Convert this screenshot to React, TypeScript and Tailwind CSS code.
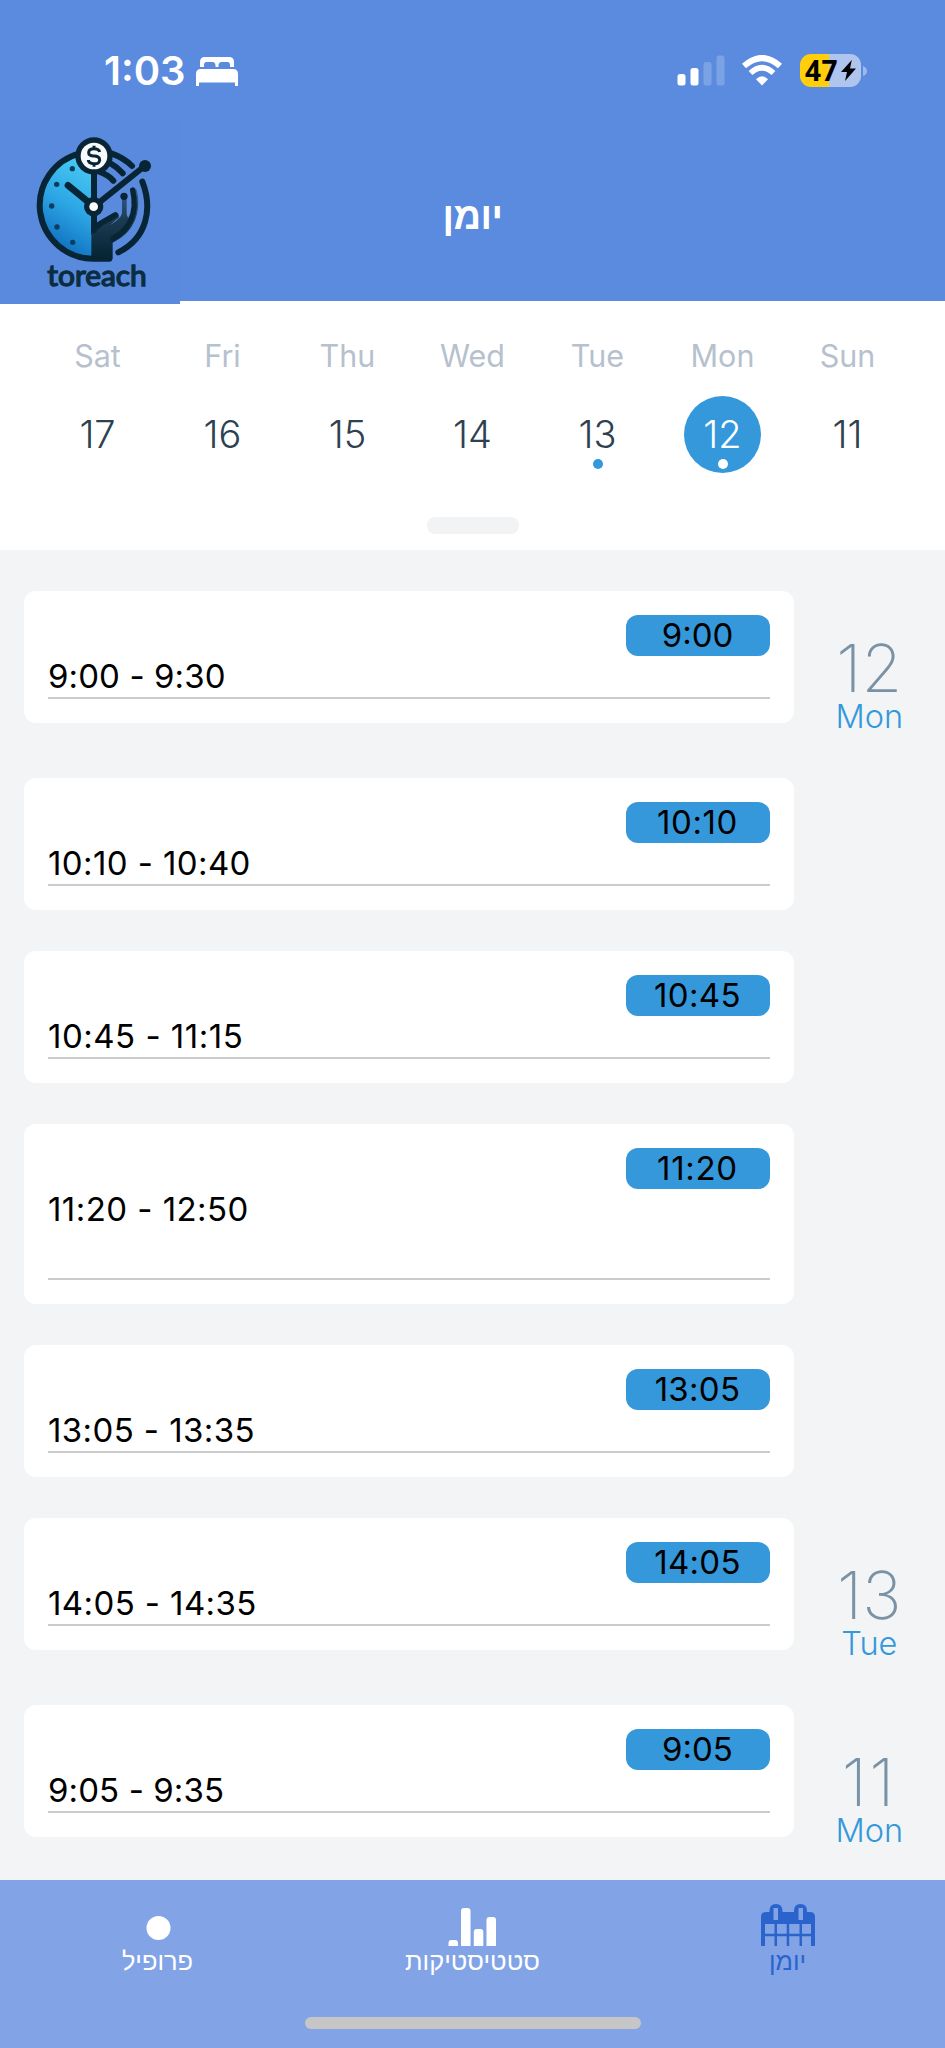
import React from "react";

type Appointment = {
  start: string;
  range: string;
  tall?: boolean;
  gap: string;
  rangeTracking: string;
  pillTracking: string;
  day?: { num: string; name: string; tracking: string };
};

const week = [
  { name: "Sat", num: "17" },
  { name: "Fri", num: "16" },
  { name: "Thu", num: "15" },
  { name: "Wed", num: "14" },
  { name: "Tue", num: "13", dot: true },
  { name: "Mon", num: "12", dot: true, selected: true },
  { name: "Sun", num: "11" },
];

const appointments: Appointment[] = [
  { start: "9:00", range: "9:00 - 9:30", gap: "h-[187px]", rangeTracking: "tracking-[0.1px]", pillTracking: "tracking-normal", day: { num: "12", name: "Mon", tracking: "tracking-normal" } },
  { start: "10:10", range: "10:10 - 10:40", gap: "h-[173px]", rangeTracking: "tracking-[0.4px]", pillTracking: "tracking-[0.6px]" },
  { start: "10:45", range: "10:45 - 11:15", gap: "h-[173px]", rangeTracking: "tracking-[0.5px]", pillTracking: "tracking-[0.4px]" },
  { start: "11:20", range: "11:20 - 12:50", gap: "h-[221px]", rangeTracking: "tracking-[0.45px]", pillTracking: "tracking-[0.7px]", tall: true },
  { start: "13:05", range: "13:05 - 13:35", gap: "h-[173px]", rangeTracking: "tracking-[0.4px]", pillTracking: "tracking-[0.3px]" },
  { start: "14:05", range: "14:05 - 14:35", gap: "h-[187px]", rangeTracking: "tracking-[0.4px]", pillTracking: "tracking-[0.3px]", day: { num: "13", name: "Tue", tracking: "tracking-normal" } },
  { start: "9:05", range: "9:05 - 9:35", gap: "h-[175px]", rangeTracking: "tracking-[0.1px]", pillTracking: "tracking-normal", day: { num: "11", name: "Mon", tracking: "tracking-[2.5px]" } },
];

function StatusBar() {
  return (
    <div className="flex h-[120px] items-start text-white">
      <div className="ml-[104px] mt-[46px] flex h-[50px] items-center">
        <span className="w-[92px] whitespace-nowrap text-[40px] font-semibold leading-[50px]">1:03</span>
        <svg width="42" height="29" viewBox="0 0 42 29" fill="currentColor">
          <path d="M4 10V5q0-5 5-5h24q5 0 5 5v5h-4V8q0-3-2.500-3h-6q-2.500 0-3 3v2h-3V8q-.5-3-3-3h-6Q8 5 8 8v2z" />
          <path d="M0 29V17q0-5 5-5h32q5 0 5 5v12h-3v-3.500H3V29z" />
        </svg>
      </div>
      <div className="ml-auto mr-[78px] mt-[54px] flex h-[33px] items-center">
        <svg width="48" height="31" viewBox="0 0 48 31" fill="currentColor">
          <rect x="0.500" y="19" width="8" height="11.500" rx="2.500" />
          <rect x="13.500" y="13" width="8" height="17.500" rx="2.500" />
          <rect x="26.500" y="7" width="8" height="23.500" rx="2.500" opacity=".2" />
          <rect x="39.500" y="0.500" width="8" height="30" rx="2.500" opacity=".2" />
        </svg>
        <svg className="ml-[16px]" width="42" height="31" viewBox="0 0 42 31" fill="none">
          <path d="M3 11Q21-5 39 11" stroke="currentColor" strokeWidth="6" />
          <path d="M9.500 18Q21 7.500 32.500 18" stroke="currentColor" strokeWidth="5.500" />
          <path d="M15 24.200Q21 18.500 27 24.200L21 30.500z" fill="currentColor" />
        </svg>
        <div className="ml-[17px] flex h-[33px] w-[61px] items-center rounded-[11px] bg-[linear-gradient(90deg,#fecf0a_47%,#b0c5ee_47%)] pl-[5px] text-black">
          <span className="w-[36px] font-['Noto_Sans'] text-[28px] font-bold leading-[33px] tracking-[0.5px]">47</span>
          <svg width="15" height="21" viewBox="0 0 15 21">
            <path d="M10.800 0 0 12h6L4 21 15 8.500H9z" fill="#000" />
          </svg>
        </div>
        <svg className="ml-[2px]" width="4" height="10" viewBox="0 0 4 10">
          <path d="M0 0q4 1.500 4 5t-4 5z" fill="#9db8eb" />
        </svg>
      </div>
    </div>
  );
}

function Logo() {
  return (
    <svg className="block shrink-0" width="180" height="184" viewBox="0 360 540 552" fill="none">
      <defs>
        <linearGradient id="face" x1=".7" y1="0" x2=".4" y2="1">
          <stop offset="0" stopColor="#49cdf3" />
          <stop offset=".5" stopColor="#2da6e5" />
          <stop offset="1" stopColor="#0b67b9" />
        </linearGradient>
        <linearGradient id="hand" x1="0" y1="0" x2="0" y2="1">
          <stop offset="0" stopColor="#355f8c" />
          <stop offset=".45" stopColor="#1c3b52" />
          <stop offset="1" stopColor="#062334" />
        </linearGradient>
      </defs>
      <rect y="360" width="540" height="552" fill="#5a8add" />
      <path d="M280 456A160 160 0 0 0 280 776z" fill="url(#face)" />
      <g stroke="#082536" strokeLinecap="round" strokeWidth="18">
        <path d="M240 460A160.500 160.500 0 0 0 282 776h46" />
        <path d="M282 520V700" />
        <path d="M204 556 282 620" strokeWidth="20" />
        <path d="M282 620 434 498" />
        <path d="M336 461Q372 474 396 498" />
        <path d="M328 488Q350 500 368 520" />
        <path d="M300 516Q324 524 340 542" />
        <path d="M427 545C458 625 442 714 355 757" />
      </g>
      <path
        d="M274 776V710Q274 682 300 666L340 640Q352 634 356 644T350 658L330 676Q364 654 366 640V592H380V640Q380 655 392 655Q404 620 394 570Q406 560 411 572C425 640 400 700 338 728V776z"
        fill="url(#hand)"
      />
      <path d="M282 690Q285 682 302 670L346 645" stroke="#082536" strokeWidth="17" strokeLinecap="round" />
      <path d="M398 570Q410 622 392 660Q378 694 338 716" stroke="#082536" strokeWidth="16" strokeLinecap="round" />
      <circle cx="372" cy="589" r="11" fill="#082536" />
      <circle cx="435" cy="498" r="18" fill="#082536" />
      <circle cx="281" cy="620" r="29" fill="#082536" />
      <circle cx="281" cy="620" r="13" fill="#fff" />
      <g fill="#0b3d60">
        <circle cx="217" cy="506" r="8" />
        <circle cx="170" cy="553" r="8" />
        <circle cx="155" cy="618" r="8" />
        <circle cx="171" cy="681" r="8" />
        <circle cx="218" cy="727" r="8" />
      </g>
      <circle cx="282" cy="468" r="56" fill="#082536" />
      <circle cx="282" cy="468" r="40" fill="#f6fafa" />
      <path d="M299 456Q297 446 282 446T266 457T282 468T299 480T282 491T265 480M282 437V446M282 491V500" stroke="#082536" strokeWidth="9" />
      <text
        x="142"
        y="859"
        textLength="298"
        lengthAdjust="spacingAndGlyphs"
        fontSize="84"
        fontFamily="Lato"
        fontWeight="400"
        fill="#0b2d42"
        stroke="#0b2d42"
        strokeWidth="4"
      >
        toreach
      </text>
    </svg>
  );
}

function Header() {
  return (
    <header className="h-[301px] bg-[#5b8bde]">
      <StatusBar />
      <div className="grid grid-cols-[180px_1fr_180px]">
        <Logo />
        <h1 dir="rtl" className="mt-[66px] text-center font-['Liberation_Sans',sans-serif] text-[38px] font-bold leading-[60px] tracking-[-0.5px] text-white">
          יומן
        </h1>
      </div>
    </header>
  );
}

function WeekStrip() {
  return (
    <section className="flex h-[249px] flex-col items-center bg-white px-[35px] pt-[35px]">
      <div className="grid w-full grid-cols-7">
        {week.map((d) => (
          <div key={d.name} className="flex flex-col items-center">
            <span className="text-[30.500px] leading-[40px] text-[#b6c1cd]">{d.name}</span>
            <div
              className={
                d.selected
                  ? "mt-[20px] flex h-[77px] w-[77px] flex-col items-center rounded-full bg-[#3498db] pt-[13px] text-white"
                  : "mt-[20px] flex h-[77px] w-[77px] flex-col items-center pt-[13px] text-[#2d4150]"
              }
            >
              <span className="text-[38px] font-light leading-[50px]">{d.num}</span>
              {d.dot && (
                <span className={d.selected ? "h-[10px] w-[10px] rounded-full bg-white" : "h-[10px] w-[10px] rounded-full bg-[#3498db]"} />
              )}
            </div>
          </div>
        ))}
      </div>
      <div className="mt-[44px] h-[17px] w-[92px] rounded-[8px] bg-[#f2f3f5]" />
    </section>
  );
}

function AppointmentRow({ item }: { item: Appointment }) {
  return (
    <div className={`flex shrink-0 items-start ${item.gap}`}>
      <article className={`ml-[24px] flex w-[769.500px] flex-col rounded-[12px] bg-white p-[24px] pb-0 ${item.tall ? "h-[180px]" : "h-[132px]"}`}>
        <div
          className={`flex h-[41px] w-[144px] items-center justify-center self-end rounded-[12px] bg-[#3498db] text-[33px] leading-[41px] text-black ${item.pillTracking}`}
        >
          {item.start}
        </div>
        <div
          className={`border-b-2 border-[#cccccc] text-[33px] leading-[40px] text-black ${item.rangeTracking} ${item.tall ? "h-[91px]" : "h-[43px]"}`}
        >
          {item.range}
        </div>
      </article>
      {item.day && (
        <div className="flex flex-1 flex-col items-center pt-[51px]">
          <span className={`text-[66px] font-extralight leading-[52px] text-[#7a92a5] ${item.day.tracking}`}>{item.day.num}</span>
          <span className="mt-[6px] text-[32.500px] font-light leading-[34px] text-[#3498db]">{item.day.name}</span>
        </div>
      )}
    </div>
  );
}

function TabBar() {
  return (
    <footer className="flex h-[168px] flex-col items-center bg-[#82a4e6] font-['Liberation_Sans',sans-serif] text-[25.400px] text-white">
      <nav className="grid w-full grid-cols-3 text-center">
        <div className="flex flex-col items-center">
          <svg width="56" height="66" viewBox="0 0 56 66">
            <circle cx="28.500" cy="48" r="12" fill="#fff" />
          </svg>
          <span dir="rtl" className="leading-[30px]">פרופיל</span>
        </div>
        <div className="flex flex-col items-center">
          <svg width="56" height="66" viewBox="0 0 56 66" fill="#fff">
            <path d="M3.500 66v-3q0-3 3-3H10q3 0 3 3v3zM16 66V31q0-3 3-3h3.500q3 0 3 3v35zM28.800 66V52q0-3 3-3h3.500q3 0 3 3v14zM51 66V40q0-3-3-3h-3.500q-3 0-3 3v26z" />
          </svg>
          <span dir="rtl" className="leading-[30px]">סטטיסטיקות</span>
        </div>
        <div className="flex flex-col items-center text-[#2b63cc]">
          <svg width="56" height="66" viewBox="0 0 56 66" fill="currentColor">
            <path
              fillRule="evenodd"
              d="M1 66V37q0-5 5-5h3.500v-1q0-7 6.500-7t6.500 7v1H34v-1q0-7 6.500-7t6.500 7v1h3q5 0 5 5v29h-4v-9.800h-9V66h-2.500v-9.800H29.200V66h-2.500v-9.800H17V66h-2.500v-9.800H5V66zM5 44v9.800h9.500V44zm12 0v9.800h9.700V44zm12.200 0v9.800h10.300V44zm12.800 0v9.800h9V44zM13.500 28v12h4.500V28zM38.500 28v12h4.500V28z"
            />
          </svg>
          <span dir="rtl" className="leading-[30px]">יומן</span>
        </div>
      </nav>
      <div className="mt-[41px] h-[12px] w-[336px] rounded-full bg-[#c6c6c6]" />
    </footer>
  );
}

export default function App() {
  return (
    <div className="flex h-[2048px] w-[945px] flex-col overflow-hidden bg-[#f2f4f6] font-['Inter',sans-serif]">
      <div className="relative z-10">
        <Header />
      </div>
      <WeekStrip />
      <main className="flex h-[1330px] flex-col pt-[41px]">
        {appointments.map((item) => (
          <AppointmentRow key={item.range} item={item} />
        ))}
      </main>
      <TabBar />
    </div>
  );
}
